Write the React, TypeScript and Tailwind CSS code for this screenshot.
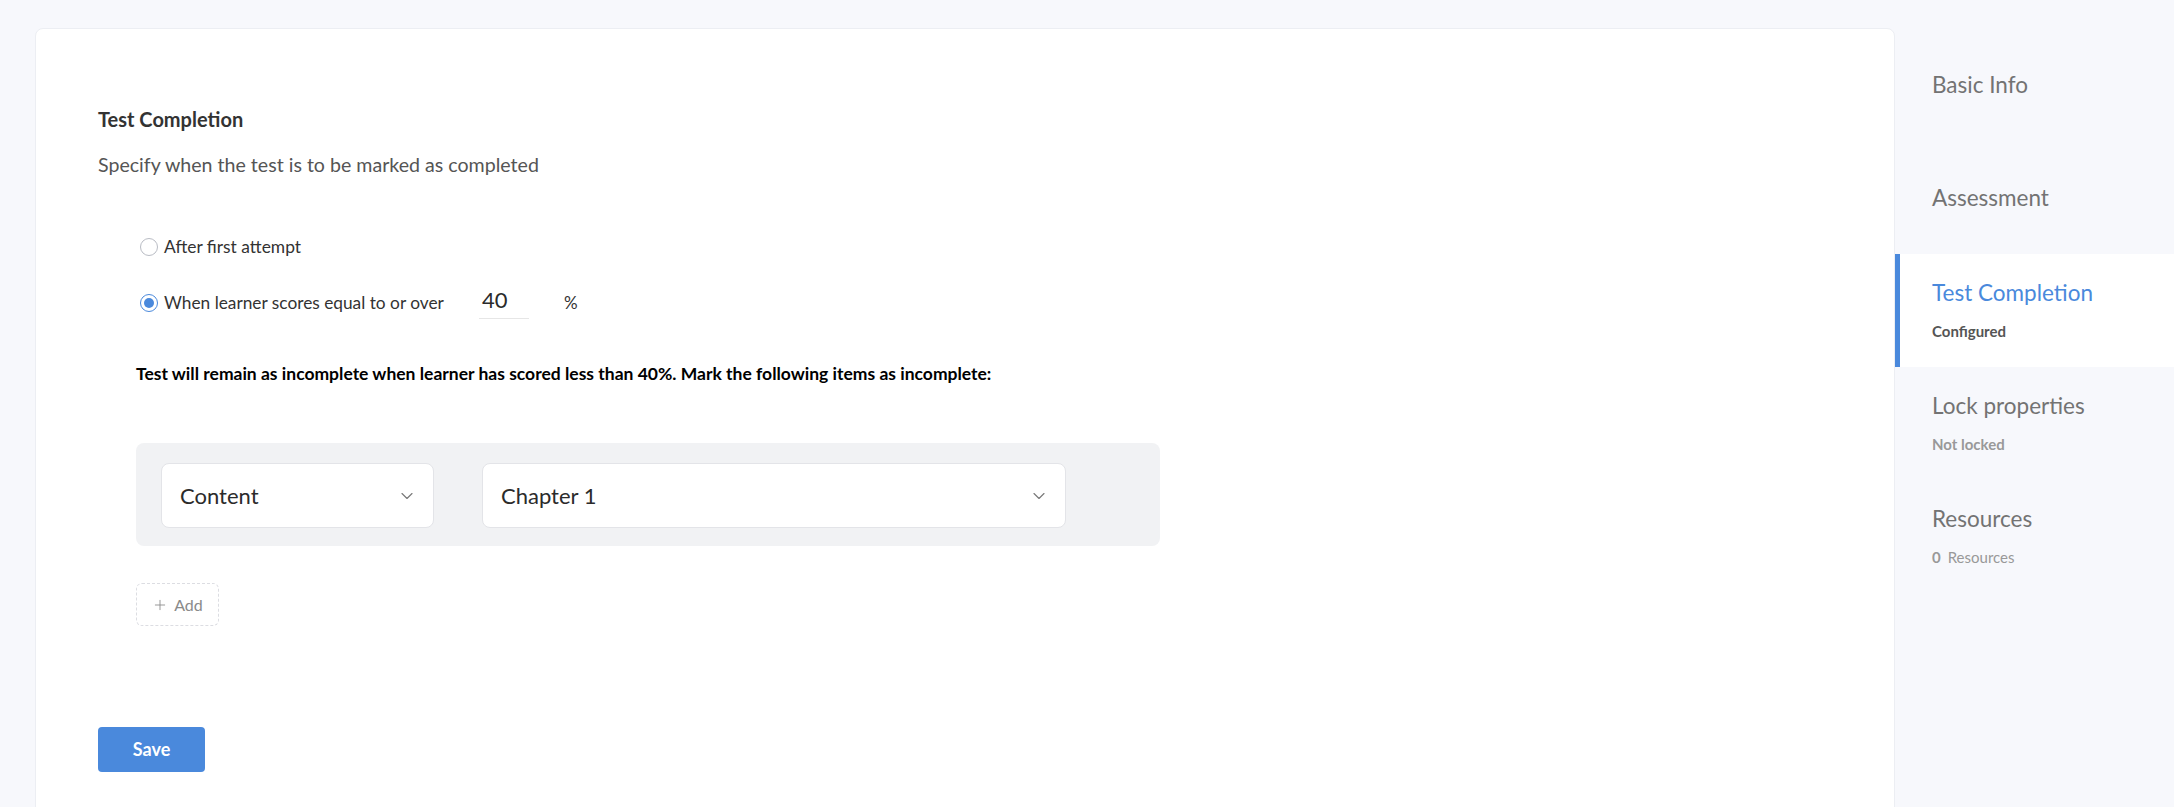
import { ChevronDown, Plus } from "lucide-react";

const font = { fontFamily: "Lato, 'Open Sans', sans-serif" };

const NAV = [
  { title: "Basic Info" },
  { title: "Assessment" },
  { title: "Test Completion", sub: "Configured", active: true },
  { title: "Lock properties", sub: "Not locked" },
  { title: "Resources", count: "0", sub: "Resources" },
];

function Radio({ checked }: { checked?: boolean }) {
  return checked ? (
    <span className="flex h-[18px] w-[18px] shrink-0 items-center justify-center rounded-full border border-[#4a89dc] bg-white">
      <span className="h-[10px] w-[10px] rounded-full bg-[#4a89dc]" />
    </span>
  ) : (
    <span className="h-[18px] w-[18px] shrink-0 rounded-full border border-[#b9bcc4] bg-white" />
  );
}

function Select({ label, className }: { label: string; className: string }) {
  return (
    <div className={`flex h-[65px] items-center justify-between rounded-[8px] border border-[#e3e4e8] bg-white pl-[18px] pr-[16px] ${className}`}>
      <span className="text-[22px] text-[#2b2b2b]">{label}</span>
      <ChevronDown size={20} strokeWidth={1.4} color="#7a7a7a" />
    </div>
  );
}

export default function App() {
  return (
    <div className="flex min-h-screen bg-[#f7f8fc]" style={font}>
      {/* main card */}
      <div className="flex-1 pl-[35px] pt-[28px]">
        <div className="flex min-h-[779px] flex-col rounded-t-[8px] border border-[#eceef3] bg-white pb-[36px] pl-[62px] pt-[78px]">
          <div className="text-[20px] font-bold leading-[24px] text-[#333]">Test Completion</div>
          <div className="mt-[22px] text-[19.6px] leading-[24px] text-[#555]">Specify when the test is to be marked as completed</div>

          <div className="ml-[38px] mt-[58px] flex flex-col">
            <label className="ml-[4px] flex items-center gap-[6px] text-[17.4px] leading-[24px] text-[#333]">
              <Radio />
              After first attempt
            </label>
            <div className="ml-[4px] mt-[27px] flex items-center text-[17.3px] text-[#333]">
              <Radio checked />
              <span className="ml-[6px] leading-[24px]">When learner scores equal to or over</span>
              <span className="ml-[35px] w-[50px] border-b border-[#e6e6e6] pb-[4px] pl-[3px] text-[22px] leading-[28px] text-[#2b2b2b]">40</span>
              <span className="ml-[35px] text-[17px]">%</span>
            </div>

            <div className="mt-[43px] text-[17.5px] font-bold leading-[24px] text-black">
              Test will remain as incomplete when learner has scored less than 40%. Mark the following items as incomplete:
            </div>

            <div className="mt-[57px] flex w-[1024px] items-center gap-[48px] rounded-[8px] bg-[#f1f2f4] pb-[18px] pl-[25px] pt-[20px]">
              <Select label="Content" className="w-[273px]" />
              <Select label="Chapter 1" className="w-[584px]" />
            </div>

            <button className="mt-[37px] flex h-[43px] w-[83px] items-center justify-center gap-[6px] rounded-[6px] border border-dashed border-[#dcdde2] text-[16px] text-[#8a8a8a]">
              <Plus size={16} strokeWidth={1.3} color="#8a8a8a" />
              Add
            </button>
          </div>

          <button className="mt-[101px] h-[45px] w-[107px] rounded-[4px] bg-[#4a89dc] text-[18px] font-bold text-white">Save</button>
        </div>
      </div>

      {/* side nav */}
      <div className="w-[279px] shrink-0 pt-[28px]">
        {NAV.map((n) => (
          <div
            key={n.title}
            className={`flex h-[113px] flex-col justify-center border-l-[5px] pl-[32px] ${n.sub ? "pb-[3px]" : ""} ${n.active ? "border-[#4a89dc] bg-white" : "border-transparent"}`}
          >
            <div className={`text-[22.5px] leading-[28px] ${n.active ? "text-[#4a89dc]" : "text-[#737373]"}`}>{n.title}</div>
            {n.sub && (
              <div className={`mt-[15px] text-[15px] leading-[18px] ${n.active ? "font-bold text-[#555]" : "text-[#999]"}`}>
                {n.count ? (
                  <>
                    <span className="font-bold">{n.count}</span>
                    <span className="ml-[7px]">{n.sub}</span>
                  </>
                ) : (
                  <span className="font-bold">{n.sub}</span>
                )}
              </div>
            )}
          </div>
        ))}
      </div>
    </div>
  );
}
